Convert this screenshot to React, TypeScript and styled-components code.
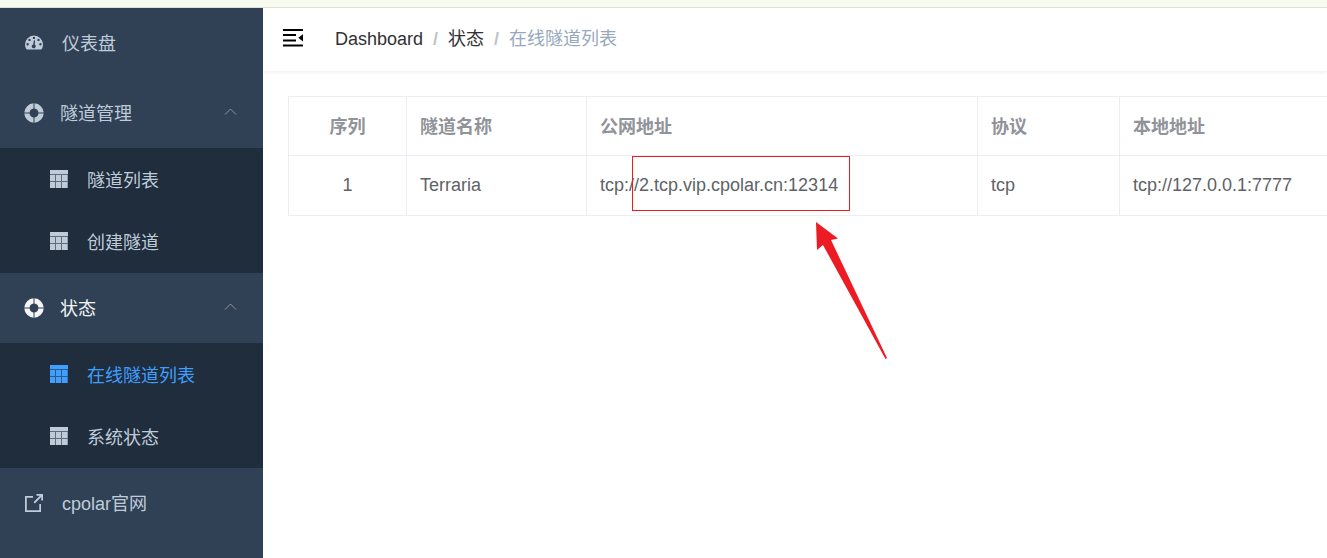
import React from "react";
import styled, { createGlobalStyle } from "styled-components";

const GlobalStyle = createGlobalStyle`
  * { box-sizing: border-box; }
  body {
    margin: 0;
    background: #fff;
    font-family: "Liberation Sans", "Noto Sans CJK SC", sans-serif;
    font-size: 18px;
    line-height: 24px;
  }
`;

const Page = styled.div`
  display: flex;
  flex-direction: column;
  min-height: 100vh;
`;

const TopStrip = styled.div`
  height: 8px;
  background: #f8fbf0;
  border-bottom: 1px solid #dfe1d6;
`;

const Body = styled.div`
  display: flex;
  flex: 1;
`;

const Sidebar = styled.nav`
  flex: 0 0 263px;
  background: #304156;
`;

const MenuLink = styled.a`
  display: flex;
  align-items: center;
  gap: 19px;
  height: 70px;
  padding: 0 25px;
  color: #bfcbd9;
  text-decoration: none;
`;

const GroupButton = styled.button<{ $active?: boolean }>`
  display: flex;
  align-items: center;
  gap: 16px;
  width: 100%;
  height: 70px;
  padding: 0 26px 0 24px;
  border: 0;
  background: none;
  font: inherit;
  text-align: left;
  color: ${(p) => (p.$active ? "#f4f4f5" : "#bfcbd9")};
`;

const Label = styled.span`
  flex: 1;
  padding-top: 2px;
`;

const SubMenu = styled.div`
  padding-top: 1px;
  background: #1f2d3d;
`;

const SubLink = styled.a<{ $active?: boolean }>`
  display: flex;
  align-items: center;
  gap: 19px;
  height: 62px;
  padding: 0 50px;
  white-space: nowrap;
  text-decoration: none;
  color: ${(p) => (p.$active ? "#409eff" : "#bfcbd9")};
`;

const Icon = styled.svg`
  display: block;
  flex: none;
  fill: currentColor;
`;

const Main = styled.main`
  flex: 1;
  min-width: 0;
  overflow: hidden;
`;

const Header = styled.header`
  display: flex;
  align-items: center;
  gap: 32px;
  height: 63px;
  padding: 0 20px 2px;
  box-shadow: 0 1px 4px rgba(0, 21, 41, 0.08);
`;

const ToggleButton = styled.button`
  padding: 0;
  border: 0;
  background: none;
  color: #000;
`;

const Breadcrumb = styled.nav`
  display: flex;
  white-space: nowrap;
`;

const Crumb = styled.a`
  color: #303133;
  text-decoration: none;
`;

const Current = styled.span`
  color: #97a8be;
`;

const Separator = styled.span`
  margin: 0 10px;
  font-weight: 700;
  color: #c0c4cc;
`;

const TableArea = styled.section`
  padding: 25px 0 0 25px;
`;

const Table = styled.table`
  width: calc(100% + 160px);
  table-layout: fixed;
  border-collapse: separate;
  border-spacing: 0;
  border-top: 1px solid #ebeef5;
  border-left: 1px solid #ebeef5;
  color: #606266;
`;

const Col = styled.col<{ $width?: number }>`
  width: ${(p) => (p.$width ? `${p.$width}px` : "auto")};
`;

const HeadCell = styled.th<{ $center?: boolean }>`
  height: 59px;
  padding: 2px 13px 0;
  border-right: 1px solid #ebeef5;
  border-bottom: 1px solid #ebeef5;
  text-align: ${(p) => (p.$center ? "center" : "left")};
  font-weight: 700;
  color: #909399;
`;

const Cell = styled.td<{ $center?: boolean }>`
  position: relative;
  height: 60px;
  padding: 0 13px 2px;
  border-right: 1px solid #ebeef5;
  border-bottom: 1px solid #ebeef5;
  text-align: ${(p) => (p.$center ? "center" : "left")};
  white-space: nowrap;
`;

const Highlight = styled.div`
  position: absolute;
  top: 0;
  left: 45px;
  width: 218px;
  height: 55px;
  border: 1px solid #ed1c24;
`;

const Arrow = styled.svg`
  position: absolute;
  top: 65px;
  left: 228px;
  fill: #ed1c24;
`;

const GaugeIcon = () => (
  <Icon width="18" height="18" viewBox="0 0 18 18">
    <path
      fillRule="evenodd"
      d="M9 1.500a9 9 0 0 1 9 9c0 1.800-.5 3.400-1.300 4.600-.2.300-.4.400-.7.400H2c-.3 0-.5-.1-.7-.4A8.600 8.600 0 0 1 0 10.500a9 9 0 0 1 9-9ZM9 2.700a1.200 1.200 0 1 0 0 2.400 1.200 1.200 0 0 0 0-2.400ZM4.500 4.700a1.200 1.200 0 1 0 0 2.400 1.200 1.200 0 0 0 0-2.400ZM13.500 4.700a1.200 1.200 0 1 0 0 2.400 1.200 1.200 0 0 0 0-2.400ZM2.600 9.100a1.200 1.200 0 1 0 0 2.400 1.200 1.200 0 0 0 0-2.400ZM15.400 9.100a1.200 1.200 0 1 0 0 2.400 1.200 1.200 0 0 0 0-2.400ZM8.900 6.200l-.7 4.200a2 2 0 1 0 1.500.2l.4-4.200Z"
    />
  </Icon>
);

const HelpIcon = () => (
  <Icon width="20" height="20" viewBox="0 0 20 20">
    <path d="M9.500.3v5.300a4.500 4.500 0 0 0-3.900 3.900H.3A9.800 9.800 0 0 1 9.500.3ZM10.500.3v5.300a4.500 4.500 0 0 1 3.900 3.900h5.300A9.800 9.800 0 0 0 10.500.3ZM9.500 19.700v-5.300a4.500 4.500 0 0 1-3.900-3.900H.3a9.800 9.800 0 0 0 9.200 9.200ZM10.500 19.700v-5.300a4.500 4.500 0 0 0 3.900-3.900h5.300a9.800 9.800 0 0 1-9.200 9.200Z" />
  </Icon>
);

const GridIcon = () => (
  <Icon width="18" height="20" viewBox="0 0 18 20">
    <path opacity="0.4" d="M0 0h18v18H0Z" />
    <path d="M0 0h18v4H0ZM0 5h5v6H0ZM6 5h5v6H6ZM12 5h5.500v6H12ZM0 12h5v6H0ZM6 12h5v6H6ZM12 12h5.500v6H12Z" />
  </Icon>
);

const ExternalIcon = () => (
  <Icon width="18" height="18" viewBox="0 0 18 18">
    <path d="M0 2h8v1.700H1.800v12.500h12.500V10H16v8H0ZM11.500 0H18v6.500h-1.800V3.100L9.900 9.400 8.600 8.100l6.300-6.300h-3.400Z" />
  </Icon>
);

const ChevronUp = () => (
  <svg width="13" height="10" viewBox="0 0 13 10" fill="none" stroke="#909399">
    <path d="M1 6.500 6.500 1 12 6.500" />
  </svg>
);

const FoldIcon = () => (
  <Icon width="20" height="20" viewBox="0 0 20 20">
    <path d="M0 0h20v2H0ZM0 5h13v2H0ZM0 10.500h13v2H0ZM0 15.500h20v2H0ZM20 5.200v7.200L15.300 8.800Z" />
  </Icon>
);

interface Group {
  label: string;
  active?: boolean;
  items: { label: string; active?: boolean }[];
}

const groups: Group[] = [
  { label: "隧道管理", items: [{ label: "隧道列表" }, { label: "创建隧道" }] },
  {
    label: "状态",
    active: true,
    items: [{ label: "在线隧道列表", active: true }, { label: "系统状态" }],
  },
];

export default function App() {
  return (
    <>
      <GlobalStyle />
      <Page>
        <TopStrip />
        <Body>
          <Sidebar>
            <MenuLink href="#dashboard">
              <GaugeIcon />
              <Label>仪表盘</Label>
            </MenuLink>
            {groups.map((group) => (
              <React.Fragment key={group.label}>
                <GroupButton type="button" aria-expanded="true" $active={group.active}>
                  <HelpIcon />
                  <Label>{group.label}</Label>
                  <ChevronUp />
                </GroupButton>
                <SubMenu>
                  {group.items.map((item) => (
                    <SubLink key={item.label} href="#page" $active={item.active}>
                      <GridIcon />
                      <Label>{item.label}</Label>
                    </SubLink>
                  ))}
                </SubMenu>
              </React.Fragment>
            ))}
            <MenuLink href="#website">
              <ExternalIcon />
              <Label>cpolar官网</Label>
            </MenuLink>
          </Sidebar>
          <Main>
            <Header>
              <ToggleButton type="button" aria-label="折叠菜单">
                <FoldIcon />
              </ToggleButton>
              <Breadcrumb>
                <Crumb href="#dashboard">Dashboard</Crumb>
                <Separator>/</Separator>
                <Crumb href="#status">状态</Crumb>
                <Separator>/</Separator>
                <Current>在线隧道列表</Current>
              </Breadcrumb>
            </Header>
            <TableArea>
              <Table>
                <colgroup>
                  <Col $width={118} />
                  <Col $width={180} />
                  <Col $width={391} />
                  <Col $width={142} />
                  <Col />
                </colgroup>
                <thead>
                  <tr>
                    <HeadCell $center>序列</HeadCell>
                    <HeadCell>隧道名称</HeadCell>
                    <HeadCell>公网地址</HeadCell>
                    <HeadCell>协议</HeadCell>
                    <HeadCell>本地地址</HeadCell>
                  </tr>
                </thead>
                <tbody>
                  <tr>
                    <Cell $center>1</Cell>
                    <Cell>Terraria</Cell>
                    <Cell>
                      tcp://2.tcp.vip.cpolar.cn:12314
                      <Highlight />
                      <Arrow width="74" height="140" viewBox="0 0 74 140">
                        <path d="M1 1 23 17.500 16 19 72 137 70.500 138 8 24 2 29Z" />
                      </Arrow>
                    </Cell>
                    <Cell>tcp</Cell>
                    <Cell>tcp://127.0.0.1:7777</Cell>
                  </tr>
                </tbody>
              </Table>
            </TableArea>
          </Main>
        </Body>
      </Page>
    </>
  );
}
